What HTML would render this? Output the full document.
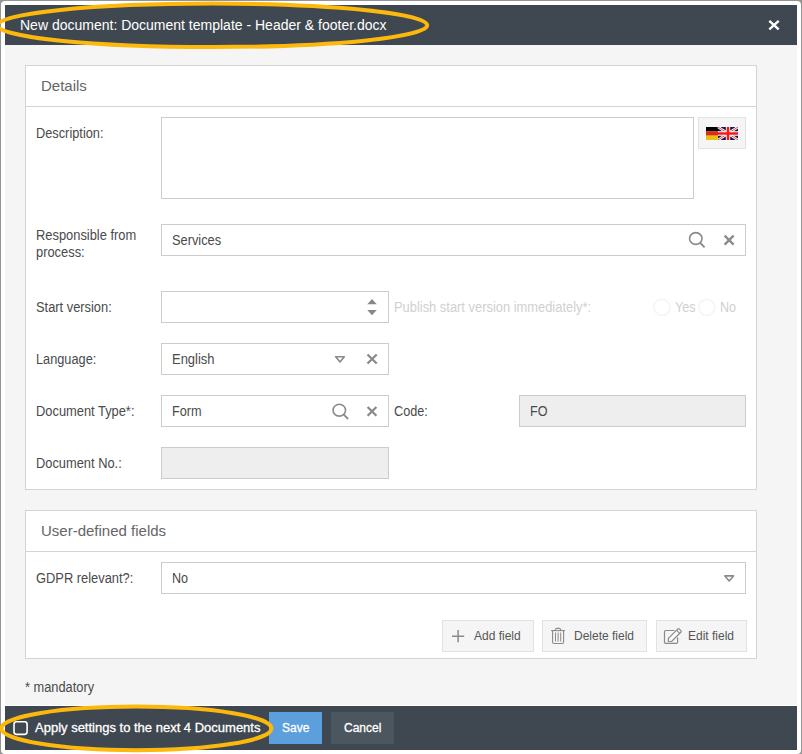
<!DOCTYPE html>
<html lang="en">
<head>
<meta charset="utf-8">
<title>New document</title>
<style>
*{box-sizing:border-box;margin:0;padding:0}
html,body{width:802px;height:754px;overflow:hidden;background:#949494}
body{font-family:"Liberation Sans",Arial,sans-serif;font-size:14px;color:#444;position:relative}
#frame{position:absolute;left:1px;top:1px;width:800px;height:753px;border-radius:4px;background:#fff}
#hdr{position:absolute;left:5px;top:5px;width:792px;height:40px;background:#3f4850}
#body{position:absolute;left:5px;top:45px;width:792px;height:660px;background:#f5f5f5}
#ftr{position:absolute;left:5px;top:706px;width:792px;height:44px;background:#3f4850}
.t{position:absolute;white-space:nowrap;line-height:16px;transform-origin:0 0}
#title{left:20px;top:17px;color:#fff;font-size:14px}
.w{color:#fff;-webkit-text-stroke:.3px #fff}
.panel{position:absolute;left:25px;width:732px;background:#fff;border:1px solid #d4d4d4}
.phead{position:absolute;left:0;top:0;width:100%;height:41px;border-bottom:1px solid #d4d4d4}
.ptitle{left:15px;top:11px;font-size:15px;color:#666;line-height:18px}
.inp{position:absolute;height:32px;border:1px solid #ccc;background:#fff}
.dis{background:#eee}
.lbl{color:#4a4a4a}
.val{color:#4a4a4a}
.btn{position:absolute;height:32px;background:#f5f5f5;border:1px solid #e2e2e2}
</style>
</head>
<body>
<div id="frame"></div>
<div id="hdr"></div>
<div id="body"></div>
<div id="ftr"></div>
<div class="t" id="title">New document: Document template - Header &amp; footer.docx</div>

<div class="panel" id="p1" style="top:65px;height:425px">
  <div class="phead"></div>
  <div class="t ptitle">Details</div>
</div>
<div class="panel" id="p2" style="top:510px;height:149px">
  <div class="phead"></div>
  <div class="t ptitle">User-defined fields</div>
</div>

<div class="t lbl" style="left:36px;top:125px;transform:scaleX(0.913)">Description:</div>
<div class="inp" style="left:161px;top:117px;width:533px;height:82px"></div>
<div class="btn" style="left:698px;top:117px;width:48px;height:32px"></div>

<div class="t lbl" style="left:36px;top:227px;line-height:17px;white-space:normal;width:120px;transform:scaleX(0.92)">Responsible from process:</div>
<div class="inp" style="left:161px;top:224px;width:585px"></div>
<div class="t val" style="left:172px;top:232px;transform:scaleX(0.914)">Services</div>

<div class="t lbl" style="left:36px;top:299px;transform:scaleX(0.918)">Start version:</div>
<div class="inp" style="left:161px;top:291px;width:228px"></div>
<div class="t" style="left:394px;top:299px;color:#d0d0d0;transform:scaleX(0.921)">Publish start version immediately*:</div>
<div class="t" style="left:675px;top:299px;color:#d0d0d0;transform:scaleX(0.905)">Yes</div>
<div class="t" style="left:720px;top:299px;color:#d0d0d0;transform:scaleX(0.9)">No</div>

<div class="t lbl" style="left:36px;top:351px;transform:scaleX(0.911)">Language:</div>
<div class="inp" style="left:161px;top:343px;width:228px"></div>
<div class="t val" style="left:172px;top:351px;transform:scaleX(0.926)">English</div>

<div class="t lbl" style="left:36px;top:403px;transform:scaleX(0.919)">Document Type*:</div>
<div class="inp" style="left:161px;top:395px;width:228px"></div>
<div class="t val" style="left:172px;top:403px;transform:scaleX(0.905)">Form</div>
<div class="t lbl" style="left:394px;top:403px;transform:scaleX(0.905)">Code:</div>
<div class="inp dis" style="left:519px;top:395px;width:227px"></div>
<div class="t val" style="left:530px;top:403px;transform:scaleX(0.9)">FO</div>

<div class="t lbl" style="left:36px;top:455px;transform:scaleX(0.918)">Document No.:</div>
<div class="inp dis" style="left:161px;top:447px;width:228px"></div>

<div class="t lbl" style="left:36px;top:570px;transform:scaleX(0.92)">GDPR relevant?:</div>
<div class="inp" style="left:161px;top:562px;width:585px"></div>
<div class="t val" style="left:172px;top:570px;transform:scaleX(0.9)">No</div>

<div class="btn" style="left:442px;top:620px;width:92px"></div>
<div class="t" style="left:474px;top:628px;font-size:12px;color:#555">Add field</div>
<div class="btn" style="left:542px;top:620px;width:105px"></div>
<div class="t" style="left:574px;top:628px;font-size:12px;color:#555">Delete field</div>
<div class="btn" style="left:656px;top:620px;width:91px"></div>
<div class="t" style="left:688px;top:628px;font-size:12px;color:#555">Edit field</div>

<div class="t lbl" style="left:25px;top:679px;transform:scaleX(0.915)">* mandatory</div>

<div class="t w" style="left:35px;top:720px;font-size:13px">Apply settings to the next 4 Documents</div>
<div style="position:absolute;left:269px;top:712px;width:53px;height:32px;background:#5b9fdc"></div>
<div class="t w" style="left:282px;top:720px;font-size:12px">Save</div>
<div style="position:absolute;left:331px;top:712px;width:63px;height:32px;background:#4b565f"></div>
<div class="t w" style="left:344px;top:720px;font-size:12px">Cancel</div>


<!-- icons -->
<svg style="position:absolute;left:0;top:0" width="802" height="754" viewBox="0 0 802 754" fill="none">
  <!-- header close -->
  <path d="M769.3 20.8l9.4 8.6M778.7 20.8l-9.4 8.6" stroke="#fff" stroke-width="2.4"/>
  <!-- flag -->
  <clipPath id="fc"><rect x="706" y="127" width="32" height="13"/></clipPath>
  <g clip-path="url(#fc)">
    <rect x="706" y="127" width="12" height="4.4" fill="#000"/>
    <rect x="706" y="131.3" width="12" height="4.4" fill="#e02a10"/>
    <rect x="706" y="135.6" width="12" height="4.4" fill="#e8c010"/>
    <rect x="718" y="127" width="20" height="13" fill="#141a4c"/>
    <path d="M718 127l20 13M738 127l-20 13" stroke="#fff" stroke-width="2.6"/>
    <path d="M718 127l20 13M738 127l-20 13" stroke="#f03030" stroke-width="0.9"/>
    <path d="M728 127v13M718 133.5h20" stroke="#fff" stroke-width="4.4"/>
    <path d="M728 127v13M718 133.5h20" stroke="#f81818" stroke-width="2.6"/>
  </g>
  <!-- responsible: search + x -->
  <g stroke="#8a8a8a">
    <ellipse cx="695.8" cy="238.5" rx="6.25" ry="5.9" stroke-width="1.6"/>
    <path d="M700.3 243l4.3 4.3" stroke-width="1.8"/>
    <path d="M724.6 235.6l9 9M733.6 235.6l-9 9" stroke-width="2.3"/>
  </g>
  <!-- spinner -->
  <path d="M367.3 304.2L372 299l4.8 5.2z" fill="#888"/>
  <path d="M367.3 310.1L372 315.2l4.8-5.1z" fill="#888"/>
  <!-- language arrow + x -->
  <path d="M335.7 356.7h8.6l-4.3 5.2z" stroke="#8a8a8a" stroke-width="1.6" stroke-linejoin="round"/>
  <path d="M367.5 354.5l9.2 9M376.7 354.5l-9.2 9" stroke="#8a8a8a" stroke-width="2.3"/>
  <!-- doc type: search + x -->
  <g stroke="#8a8a8a">
    <ellipse cx="339.3" cy="410.2" rx="6.25" ry="5.9" stroke-width="1.6"/>
    <path d="M343.8 414.7l4.3 4.3" stroke-width="1.8"/>
    <path d="M367.6 407l8.8 8.8M376.4 407l-8.8 8.8" stroke-width="2.3"/>
  </g>
  <!-- gdpr arrow -->
  <path d="M724.9 575.9h8.6l-4.3 5z" stroke="#8a8a8a" stroke-width="1.6" stroke-linejoin="round"/>
  <!-- plus -->
  <path d="M452 636.2h12.2M458.1 630v12.3" stroke="#8a8a8a" stroke-width="1.5"/>
  <!-- trash -->
  <g stroke="#8a8a8a" stroke-width="1.1" stroke-linejoin="round">
    <path d="M551 630.6h14.1"/>
    <path d="M555.1 630.6q.4-2.2 1.6-2.2h2.7q1.2 0 1.6 2.2"/>
    <path d="M552.6 630.8v11.3q0 1.4 1.4 1.4h8.2q1.4 0 1.4-1.4v-11.3"/>
    <path d="M555.5 632.5v9M558.1 632.5v9M560.7 632.5v9" stroke-width="1"/>
  </g>
  <!-- edit -->
  <g stroke="#8a8a8a" stroke-width="1.2" stroke-linejoin="round">
    <path d="M674.5 630.5H665.7q-1.2 0-1.2 1.2V642.2q0 1.2 1.2 1.2H676.4q1.2 0 1.2-1.2V637.5"/>
    <path d="M668.4 641.5V638.4L677.93 628.87Q678.5 628.3 679.07 628.87L681.03 630.83Q681.6 631.4 681.03 631.97L671.5 641.5Z" fill="#fbfbfb"/>
    <path d="M676.6 630.2L679.7 633.3"/>
  </g>
  <!-- radios -->
  <circle cx="662" cy="307.3" r="8" stroke="#f6f6f6" stroke-width="2"/>
  <circle cx="706.8" cy="307.3" r="8" stroke="#f6f6f6" stroke-width="2"/>
  <!-- checkbox -->
  <rect x="14" y="721.75" width="13.1" height="12.6" rx="2.5" stroke="#fff" stroke-width="1.6"/>
</svg>
<svg style="position:absolute;left:0;top:0" width="802" height="754" viewBox="0 0 802 754">
  <ellipse cx="212.4" cy="25.3" rx="214.8" ry="21.7" fill="none" stroke="#fcb80c" stroke-width="4"/>
  <ellipse cx="136.4" cy="728.4" rx="135" ry="21.8" fill="none" stroke="#fcb80c" stroke-width="4"/>
</svg>
</body>
</html>
